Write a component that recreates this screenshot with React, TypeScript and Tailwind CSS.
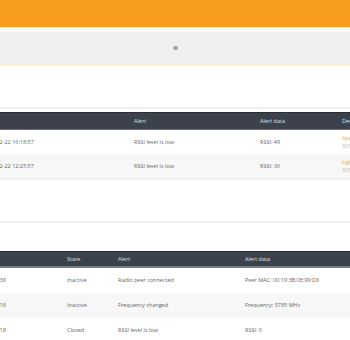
const alerts = [
  { time: "2019-02-22 16:18:57", alert: "RSSI level is low", data: "RSSI: 49", device: "Apartment 4B", mac: "30:52:CB:7A:11:04" },
  { time: "2019-02-22 12:25:57", alert: "RSSI level is low", data: "RSSI: 36", device: "Light Tower", mac: "30:52:CB:7A:11:09" },
];

const history = [
  { time: "2019-02-22 16:17:38", state: "Inactive", alert: "Radio peer connected", data: "Peer MAC: 00:19:3B:0E:99:D8" },
  { time: "2019-02-22 16:15:18", state: "Inactive", alert: "Frequency changed", data: "Frequency: 5785 MHz" },
  { time: "2019-02-22 16:14:18", state: "Closed", alert: "RSSI level is low", data: "RSSI: 0" },
];

export default function App() {
  return (
    <div className="w-[350px] h-[340px] overflow-hidden bg-white font-['Open_Sans',sans-serif] text-[5.5px] text-[#666]">
      <div className="h-[27px] bg-[#f89c1d]" />

      <div className="border-t border-[#fcecd2] bg-[#fafafa] pt-[4px] border-b-2 border-[#f9dcb1]">
        <div className="h-[32px] bg-[#efefef] flex items-center justify-center">
          <div className="w-[5px] h-[4px] rounded-full bg-[#a3a3a3]" />
        </div>
      </div>

      <div className="h-[41px]" />

      {/* active alerts */}
      <div className="border-t-2 border-b-2 border-[#f1f1f1] pt-[3px] overflow-hidden">
        <div className="ml-[-18px] w-[420px]">
          <div className="flex items-center h-[18px] bg-[#3c424b] border-t border-[#2a2f36] border-b border-b-[#646a73] text-[#dde0e3]">
            <div className="w-[152px]" />
            <div className="w-[126px]">Alert</div>
            <div className="w-[82px]">Alert data</div>
            <div className="flex-1">Device</div>
          </div>
          {alerts.map((a, i) => (
            <div
              key={a.time}
              className={`flex items-center h-[24px] ${i % 2 ? "bg-[#f7f7f7]" : "bg-white"}`}
            >
              <div className="w-[152px]">{a.time}</div>
              <div className="w-[126px]">{a.alert}</div>
              <div className="w-[82px]">{a.data}</div>
              <div className="flex-1 flex flex-col leading-[8px]">
                <span className="text-[#f3a73a]">{a.device}</span>
                <span className="text-[4.5px] text-[#b5b5b5]">{a.mac}</span>
              </div>
            </div>
          ))}
        </div>
      </div>

      <div className="h-[41px]" />

      {/* alert history */}
      <div className="border-t-2 border-[#f1f1f1] pt-[28px] overflow-hidden">
        <div className="ml-[-46px] w-[460px]">
          <div className="flex items-center h-[17px] bg-[#3c424b] border-t border-[#2a2f36] border-b-2 border-b-[#7a8089] text-[#dde0e3]">
            <div className="w-[113px]" />
            <div className="w-[51px]">State</div>
            <div className="w-[127px]">Alert</div>
            <div className="flex-1">Alert data</div>
          </div>
          {history.map((h, i) => (
            <div
              key={h.time}
              className={`flex items-center h-[25px] ${i % 2 ? "bg-[#f7f7f7]" : "bg-white"}`}
            >
              <div className="w-[113px]">{h.time}</div>
              <div className="w-[51px]">{h.state}</div>
              <div className="w-[127px]">{h.alert}</div>
              <div className="flex-1">{h.data}</div>
            </div>
          ))}
        </div>
      </div>
    </div>
  );
}
